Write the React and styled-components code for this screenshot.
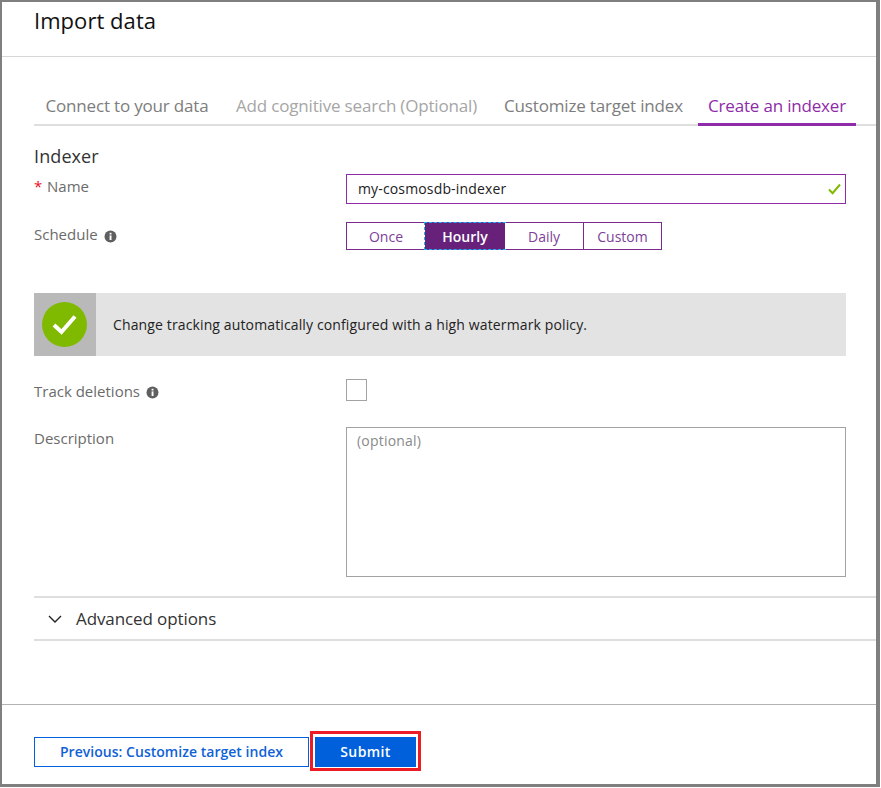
import React from 'react';
import styled, { createGlobalStyle } from 'styled-components';

const Global = createGlobalStyle`
  html, body { margin: 0; padding: 0; background: #fff; }
  * { box-sizing: border-box; }
  body { font-family: "Open Sans", "Noto Sans", "Liberation Sans", sans-serif; }
`;
const Frame = styled.div`
  width: 880px; height: 787px; background: #fff;
  border-style: solid; border-color: #7f7f7f; border-width: 2px 4px 3px 2px;
  display: flex; flex-direction: column;
`;
const Header = styled.header`
  height: 55px; flex: none; padding: 4px 0 0 32px; border-bottom: 1px solid #d6d6d6;
`;
const Title = styled.h1`
  margin: 0; font-size: 22px; line-height: 28px; font-weight: 400; color: #111; letter-spacing: 0.05px;
`;
const Body = styled.main`
  flex: 1; padding: 0 0 0 32px; display: flex; flex-direction: column;
`;
const Tabs = styled.nav`
  margin-top: 34px; height: 35px; display: flex; gap: 4px; border-bottom: 2px solid #dedede;
`;
const Tab = styled.div`
  width: ${p => p.$w}px; height: 35px; flex: none; text-align: center; font-size: 17px; line-height: 29px;
  letter-spacing: -0.18px; white-space: nowrap;
  color: ${p => p.$active ? '#8e2ba8' : p.$muted ? '#a6a6a6' : '#7d7d7d'};
  border-bottom: 3px solid ${p => p.$active ? '#8e2ba8' : 'transparent'};
`;
const Form = styled.div`
  width: 812px; display: flex; flex-direction: column;
`;
const Section = styled.h2`
  margin: 18px 0 0; font-size: 18px; line-height: 24px; font-weight: 400; color: #333; letter-spacing: 0.1px;
`;
const Row = styled.div`
  display: grid; grid-template-columns: 312px 1fr; align-items: start; margin-top: ${p => p.$mt || 0}px;
`;
const Label = styled.label`
  display: flex; align-items: center; gap: 6px; font-size: 15px; line-height: 20px; color: #6b6b6b;
  padding-top: ${p => p.$pt || 0}px;
`;
const Star = styled.span`
  color: #e81123; width: 7px;
`;
const InputBox = styled.div`
  height: 30px; border: 1px solid #8e2ba8; padding: 0 4px 2px 11px; display: flex; align-items: center; justify-content: space-between;
  font-size: 14px; color: #222; letter-spacing: 0.15px;
`;
const Segments = styled.div`
  display: flex; width: 316px; height: 28px; border: 1px solid #7a2a8c;
`;
const Segment = styled.div`
  width: ${p => p.$w}px; flex: none; display: flex; align-items: center; justify-content: center; font-size: 14px; letter-spacing: 0;
  color: ${p => p.$on ? '#fff' : '#7d3f98'};
  font-weight: ${p => p.$on ? 600 : 400};
  background: ${p => p.$on ? '#68217a' : '#fff'};
  outline: ${p => p.$on ? '1px dashed #19b5f1' : 'none'};
  border-left: ${p => p.$divider ? '1px solid #7a2a8c' : 'none'};
`;
const Banner = styled.div`
  margin-top: 43px; height: 63px; display: flex; align-items: center; background: #e3e3e3;
`;
const BannerIcon = styled.div`
  width: 62px; height: 63px; padding-right: 1px; background: #b9b9b9; display: flex; align-items: center; justify-content: center;
`;
const BannerText = styled.div`
  margin-left: 17px; font-size: 14px; color: #222; letter-spacing: 0.13px;
`;
const Checkbox = styled.div`
  width: 21px; height: 22px; border: 1px solid #a3a3a3; background: #fff;
`;
const TextArea = styled.div`
  height: 150px; border: 1px solid #a3a3a3; padding: 3px 10px; font-size: 14px; line-height: 20px; color: #8a8a8a; letter-spacing: 0.2px;
`;
const Advanced = styled.div`
  margin-top: 19px; height: 45px; border-top: 2px solid #dedede; border-bottom: 2px solid #dedede;
  display: flex; align-items: center; padding-left: 14px; gap: 14px;
  font-size: 17px; color: #333; letter-spacing: -0.1px;
`;
const Footer = styled.footer`
  flex: none; height: 80px; border-top: 1px solid #b3b3b3; padding: 32px 0 0 32px; display: flex; align-items: flex-start; gap: 6px;
`;
const Button = styled.button`
  position: relative; height: 30px; width: ${p => p.$w}px; padding: 0 0 2px; font-family: inherit; font-size: 14px; font-weight: 600;
  letter-spacing: ${p => p.$primary ? '0.4px' : '0.03px'}; border: 1px solid #0060dc; border-radius: 0;
  background: ${p => p.$primary ? '#0060dc' : '#fff'};
  color: ${p => p.$primary ? '#fff' : '#0f62d6'};
`;
const RedBox = styled.span`
  position: absolute; top: -7px; bottom: -5px; left: -6px; right: -6px; border: 3px solid #ed1c24;
`;

const Info = ({ style }) => (
  <svg width="13" height="13" viewBox="0 0 13 13" style={style}>
    <circle cx="6.5" cy="6.5" r="6" fill="#5f5f5f" />
    <rect x="5.6" y="5.4" width="1.9" height="4.6" fill="#fff" />
    <rect x="5.6" y="2.8" width="1.9" height="1.7" fill="#fff" />
  </svg>
);

export default function App() {
  return (
    <>
      <Global />
      <Frame>
        <Header><Title>Import data</Title></Header>
        <Body>
          <Tabs>
            <Tab $w={186}>Connect to your data</Tab>
            <Tab $w={265} $muted>Add cognitive search (Optional)</Tab>
            <Tab $w={201}>Customize target index</Tab>
            <Tab $w={158} $active>Create an indexer</Tab>
          </Tabs>
          <Form>
            <Section>Indexer</Section>
            <Row $mt={6}>
              <Label $pt={2}><Star>*</Star>Name</Label>
              <InputBox>
                my-cosmosdb-indexer
                <svg width="13" height="12" viewBox="0 0 13 12" style={{ marginTop: 2 }}><path d="M1 6.5 L4.6 10.2 L12 1.5" fill="none" stroke="#7fba00" strokeWidth="2" /></svg>
              </InputBox>
            </Row>
            <Row $mt={18}>
              <Label $pt={2}>Schedule <Info style={{ marginTop: 4 }} /></Label>
              <Segments>
                <Segment $w={78}>Once</Segment>
                <Segment $w={80} $on>Hourly</Segment>
                <Segment $w={78}>Daily</Segment>
                <Segment $w={78} $divider>Custom</Segment>
              </Segments>
            </Row>
            <Banner>
              <BannerIcon>
                <svg width="45" height="45" viewBox="0 0 45 45">
                  <circle cx="22.5" cy="22.5" r="22.5" fill="#7fba00" />
                  <path d="M12 23 L19.5 30 L33 14.5" fill="none" stroke="#fff" strokeWidth="4" />
                </svg>
              </BannerIcon>
              <BannerText>Change tracking automatically configured with a high watermark policy.</BannerText>
            </Banner>
            <Row $mt={23}>
              <Label $pt={2}>Track deletions <Info style={{ marginTop: 3 }} /></Label>
              <Checkbox />
            </Row>
            <Row $mt={26}>
              <Label $pt={1}>Description</Label>
              <TextArea>(optional)</TextArea>
            </Row>
          </Form>
          <Advanced>
            <svg width="14" height="8" viewBox="0 0 14 8"><path d="M1 1 L7 7 L13 1" fill="none" stroke="#222" strokeWidth="1.4" /></svg>
            Advanced options
          </Advanced>
        </Body>
        <Footer>
          <Button $w={275}>Previous: Customize target index</Button>
          <Button $w={101} $primary>Submit<RedBox /></Button>
        </Footer>
      </Frame>
    </>
  );
}
